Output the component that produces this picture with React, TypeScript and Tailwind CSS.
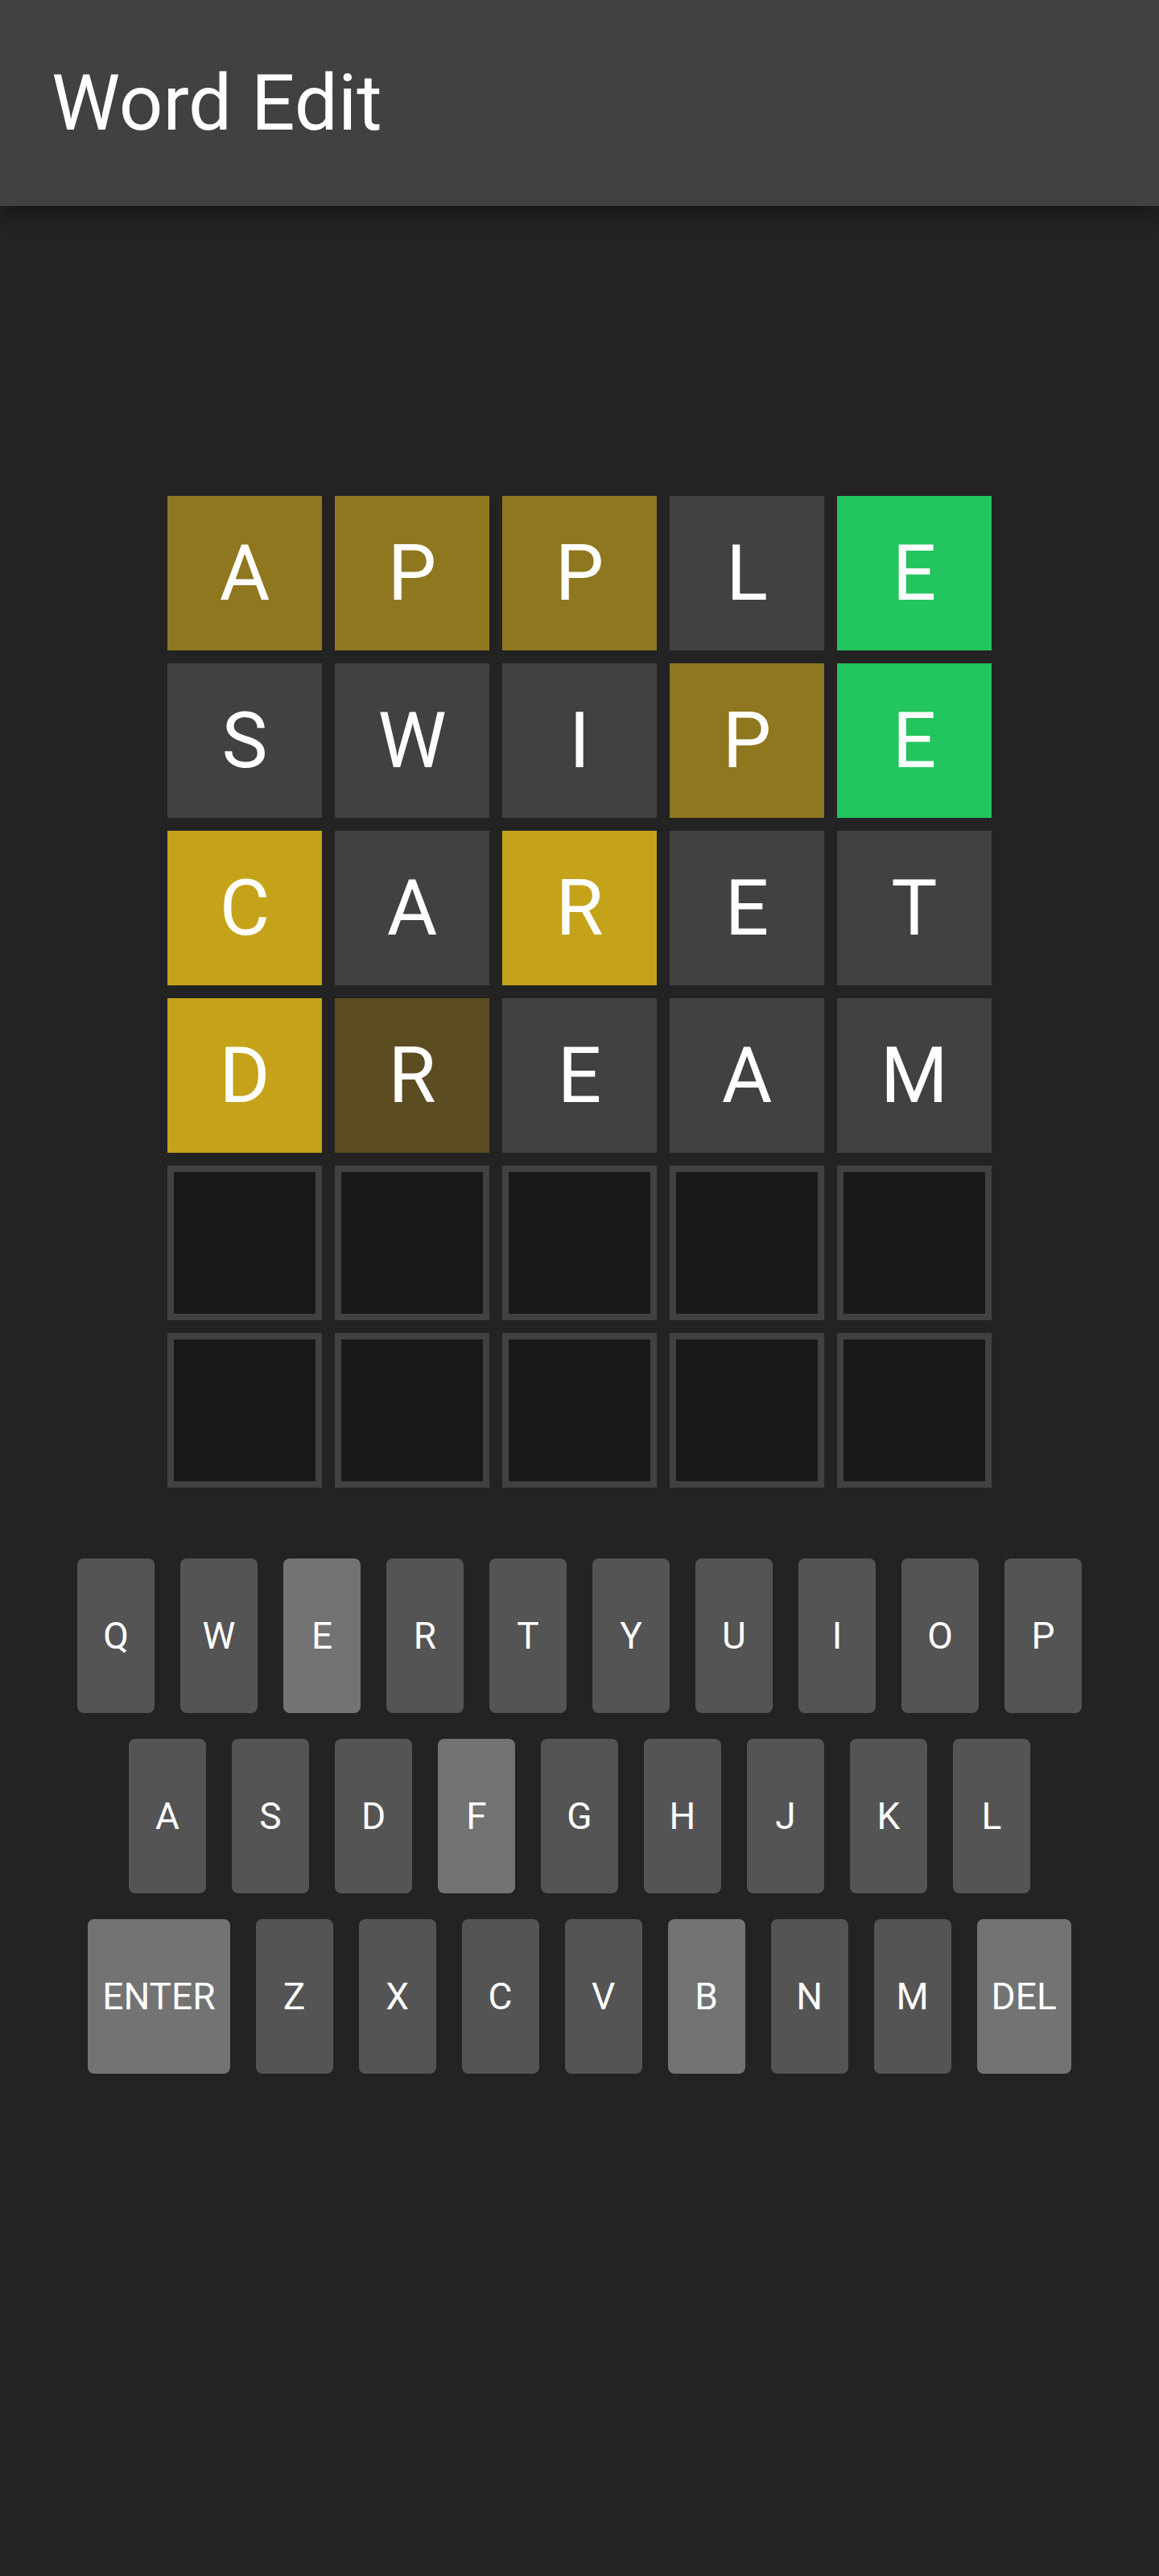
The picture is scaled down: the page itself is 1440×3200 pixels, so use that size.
import React from 'react';

type Tile = { ch: string; c: string };

const G = 'bg-[#8f7720]';
const Y = 'bg-[#c4a31a]';
const B = 'bg-[#5b4d21]';
const N = 'bg-[#414141]';
const OK = 'bg-[#22c55e]';

const rows: Tile[][] = [
  [{ ch: 'A', c: G }, { ch: 'P', c: G }, { ch: 'P', c: G }, { ch: 'L', c: N }, { ch: 'E', c: OK }],
  [{ ch: 'S', c: N }, { ch: 'W', c: N }, { ch: 'I', c: N }, { ch: 'P', c: G }, { ch: 'E', c: OK }],
  [{ ch: 'C', c: Y }, { ch: 'A', c: N }, { ch: 'R', c: Y }, { ch: 'E', c: N }, { ch: 'T', c: N }],
  [{ ch: 'D', c: Y }, { ch: 'R', c: B }, { ch: 'E', c: N }, { ch: 'A', c: N }, { ch: 'M', c: N }],
];

const keyRows = [
  ['Q', 'W', 'E', 'R', 'T', 'Y', 'U', 'I', 'O', 'P'],
  ['A', 'S', 'D', 'F', 'G', 'H', 'J', 'K', 'L'],
  ['ENTER', 'Z', 'X', 'C', 'V', 'B', 'N', 'M', 'DEL'],
];

const light = ['E', 'F', 'B', 'ENTER', 'DEL'];

const Key: React.FC<{ label: string }> = ({ label }) => (
  <div
    className={`flex h-[192px] min-w-[96px] items-center justify-center rounded-lg px-[18px] text-[46px] text-white ${
      light.includes(label) ? 'bg-[#737373]' : 'bg-[#545454]'
    }`}
  >
    {label}
  </div>
);

export default function App() {
  return (
    <div className="min-h-[3200px] bg-[#232323] font-['Roboto',sans-serif]">
      <header className="relative z-10 flex h-[256px] items-center bg-[#414141] px-16 shadow-[0_6px_24px_rgba(0,0,0,0.45)]">
        <h1 className="text-[96px] leading-none font-normal text-white">Word Edit</h1>
      </header>

      <div className="mt-[360px] flex flex-col items-center gap-4">
        {rows.map((row, i) => (
          <div key={i} className="flex gap-4">
            {row.map((t, j) => (
              <div
                key={j}
                className={`flex h-[192px] w-[192px] items-center justify-center text-[96px] leading-none text-white ${t.c}`}
              >
                {t.ch}
              </div>
            ))}
          </div>
        ))}
        {[0, 1].map((i) => (
          <div key={'e' + i} className="flex gap-4">
            {[0, 1, 2, 3, 4].map((j) => (
              <div key={j} className="h-[192px] w-[192px] border-8 border-[#414141] bg-[#191919]" />
            ))}
          </div>
        ))}
      </div>

      <div className="mt-[88px] flex flex-col items-center gap-8">
        {keyRows.map((r, i) => (
          <div key={i} className="flex gap-8">
            {r.map((k) => (
              <Key key={k} label={k} />
            ))}
          </div>
        ))}
      </div>
    </div>
  );
}
